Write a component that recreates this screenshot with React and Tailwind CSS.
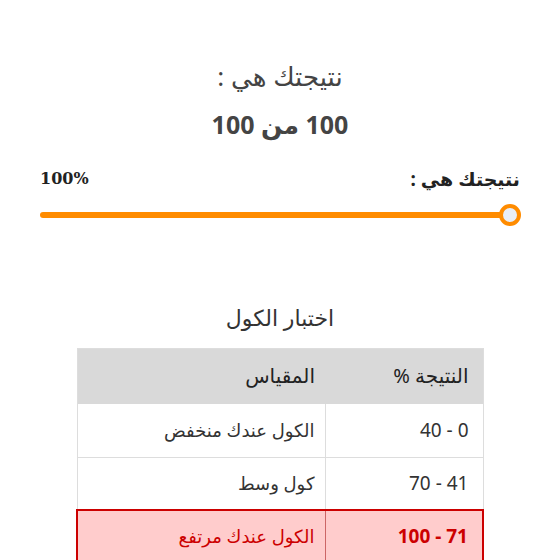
import React from 'react';

const rows = [
  { range: '0 - 40', label: 'الكول عندك منخفض' },
  { range: '41 - 70', label: 'كول وسط' },
  { range: '71 - 100', label: 'الكول عندك مرتفع', active: true },
];

export default function App() {
  const score = 100;

  return (
    <div dir="rtl" className="min-h-[560px] bg-white text-[#333] font-['Noto_Sans','DejaVu_Sans',sans-serif]">
      <div className="pt-[59px] text-center">
        <h2 className="text-[26px] leading-[34px] text-[#444]">نتيجتك هي :</h2>
        <p className="mt-[14px] text-[25px] leading-[34px] font-bold text-[#444]">{score} من 100</p>
      </div>

      <div className="mt-[24px] px-[40px]">
        <div className="flex items-center justify-between">
          <span className="text-[19px] font-bold text-[#222]">نتيجتك هي :</span>
          <span dir="ltr" className="text-[16px] font-bold text-[#222] font-['DejaVu_Serif',serif]">{score}%</span>
        </div>
        <div dir="ltr" className="relative mt-[10px] h-[22px] flex items-center">
          <div className="h-[6px] w-full rounded-full bg-[#ff8c00]" />
          <div className="absolute right-[-1px] top-0 h-[22px] w-[22px] rounded-full border-[4px] border-[#ff8c00] bg-[#e9eef7]" />
        </div>
      </div>

      <div className="mt-[77px] flex flex-col items-center">
        <h3 className="text-[22px] leading-[28px] text-[#333]">اختبار الكول</h3>
        <table className="mt-[17px] w-[408px] border-collapse border border-[#ddd] text-[19px]">
          <thead>
            <tr className="h-[56px] bg-[#d9d9d9]">
              <th className="w-[158px] px-[14px] text-right font-normal text-[20px] text-[#222]">النتيجة %</th>
              <th className="px-[10px] text-right font-normal text-[20px] text-[#222]">المقياس</th>
            </tr>
          </thead>
          <tbody>
            {rows.map((r) =>
              r.active ? (
                <tr key={r.range} className="h-[53px] bg-[#ffcccc] text-[#cc0000] border-2 border-[#cc0000]">
                  <td className="px-[14px] text-right font-bold border-l border-[#cc6666]">{r.range}</td>
                  <td className="px-[10px] text-right text-[18px]">{r.label}</td>
                </tr>
              ) : (
                <tr key={r.range} className="h-[53px] border-b border-[#ddd]">
                  <td className="px-[14px] text-right border-l border-[#ddd]">{r.range}</td>
                  <td className="px-[10px] text-right text-[18px]">{r.label}</td>
                </tr>
              )
            )}
          </tbody>
        </table>
      </div>
    </div>
  );
}
